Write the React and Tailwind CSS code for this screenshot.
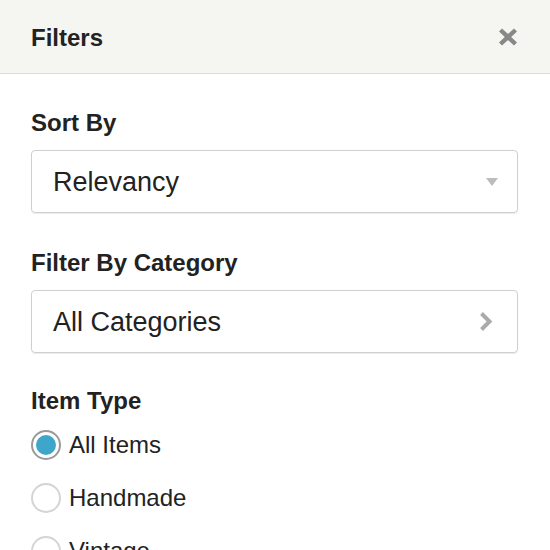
import React from "react";

function Radio({ label, checked }) {
  return (
    <label className="flex items-center gap-2 h-[30px]">
      <span
        className={`flex items-center justify-center w-[30px] h-[30px] rounded-full bg-white ${
          checked ? "border-2 border-[#9a9a9a]" : "border-2 border-[#d4d4d4]"
        }`}
      >
        {checked && <span className="w-[20px] h-[20px] rounded-full bg-[#3ea6c9]" />}
      </span>
      <span className="text-[24px] leading-[30px] text-[#222]">{label}</span>
    </label>
  );
}

export default function App() {
  return (
    <div className="w-[550px] h-[550px] overflow-hidden bg-white font-['Liberation_Sans',Arial,sans-serif]">
      <header className="h-[74px] bg-[#f5f5f1] border-b border-[#dcdcd8] flex items-center justify-between pl-[31px] pr-[32px]">
        <h1 className="text-[24px] leading-[28px] pt-[2px] font-bold text-[#222]">Filters</h1>
        <svg width="20" height="18" viewBox="0 0 20 18">
          <path d="M2.5 2 L17.5 16 M17.5 2 L2.5 16" stroke="#888" strokeWidth="4.4" strokeLinecap="butt" />
        </svg>
      </header>

      <div className="pl-[31px] pr-[32px] pt-[35px]">
        <div className="text-[24px] leading-[28px] font-bold text-[#222]">Sort By</div>
        <div className="mt-[13px] h-[63px] rounded-[4px] border border-[#cfcfcf] shadow-[0_1px_1px_rgba(0,0,0,0.08)] flex items-center justify-between pl-[21px] pr-[19px]">
          <span className="text-[27px] pt-[2px] text-[#222]">Relevancy</span>
          <svg width="12" height="8" viewBox="0 0 12 8">
            <path d="M0 0 H12 L6 8 Z" fill="#bcbcbc" />
          </svg>
        </div>

        <div className="mt-[36px] text-[24px] leading-[28px] font-bold text-[#222]">Filter By Category</div>
        <div className="mt-[13px] h-[63px] rounded-[4px] border border-[#cfcfcf] shadow-[0_1px_1px_rgba(0,0,0,0.08)] flex items-center justify-between pl-[21px] pr-[24px]">
          <span className="text-[27px] pt-[2px] text-[#222]">All Categories</span>
          <svg width="14" height="21" viewBox="0 0 14 21">
            <path d="M2.5 2.5 L10.5 10.5 L2.5 18.5" stroke="#aaa" strokeWidth="4" fill="none" />
          </svg>
        </div>

        <div className="mt-[34px] text-[24px] leading-[28px] font-bold text-[#222]">Item Type</div>
        <div className="mt-[15px] flex flex-col gap-[23px]">
          <Radio label="All Items" checked />
          <Radio label="Handmade" />
          <Radio label="Vintage" />
        </div>
      </div>
    </div>
  );
}
